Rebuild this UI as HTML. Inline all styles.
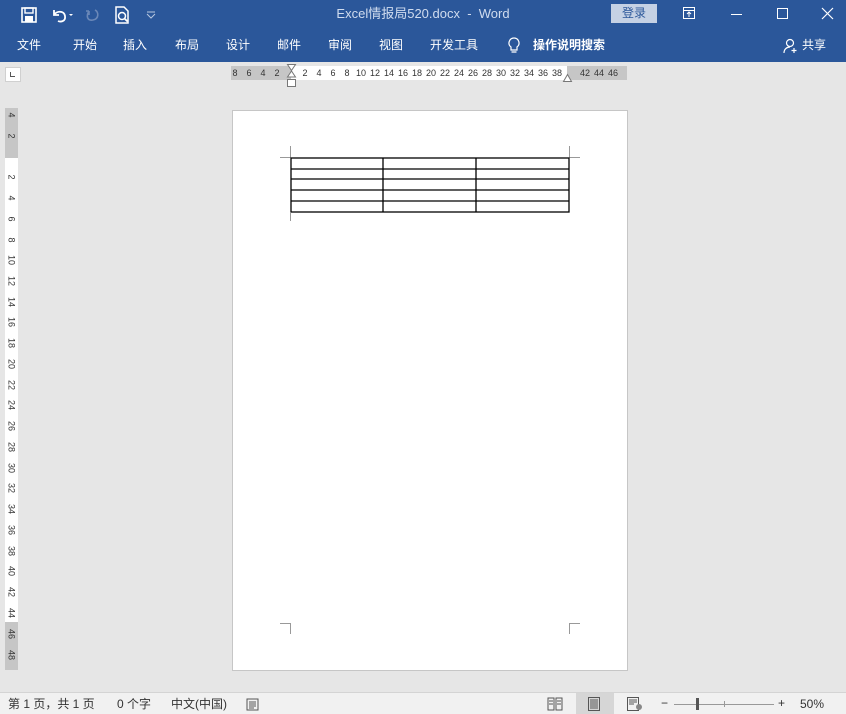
<!DOCTYPE html>
<html><head><meta charset="utf-8"><style>
*{margin:0;padding:0;box-sizing:border-box}
body{width:846px;height:714px;overflow:hidden;background:#e6e6e6;font-family:"Liberation Sans","Noto Sans CJK SC",sans-serif;position:relative}
.abs{position:absolute}
#title{left:0;top:0;width:846px;height:30px;background:#2b579a}
#tabs{left:0;top:30px;width:846px;height:32px;background:#2b579a}
.tab{position:absolute;top:7px;color:#fff;font-size:12px;line-height:16px}
.rl{position:absolute;font-size:9px;color:#333;top:68px;transform:translateX(-50%)}
.vl{position:absolute;font-size:9px;color:#333;left:5px;width:13px;text-align:center;transform:rotate(90deg)}
#status{left:0;top:692px;width:846px;height:22px;background:#f1f1f1;border-top:1px solid #d4d4d4;font-size:12px;color:#333;line-height:16px}
.cm{position:absolute;background:#999}
</style></head><body>
<div id="title" class="abs">
<svg class="abs" style="left:20px;top:6px" width="18" height="18" viewBox="0 0 18 18"><rect x="2" y="2" width="14" height="14" fill="none" stroke="#fff" stroke-width="1.6"/><rect x="5" y="2" width="8" height="5" fill="none" stroke="#fff" stroke-width="1.4"/><rect x="5" y="10" width="8" height="6" fill="#fff"/></svg>
<svg class="abs" style="left:50px;top:6px" width="26" height="18" viewBox="0 0 26 18"><path d="M4 4v5h5M4 9c2-4 10-5 11 1s-5 6-7 5" fill="none" stroke="#fff" stroke-width="1.8"/><path d="M19 8l2 2 2-2z" fill="#fff"/></svg>
<svg class="abs" style="left:85px;top:6px" width="16" height="18" viewBox="0 0 16 18"><path d="M10 4c4 2 4 9-2 10S1 10 4 5M4 5v4M4 5h-3" fill="none" stroke="#6b88b8" stroke-width="1.6"/></svg>
<svg class="abs" style="left:113px;top:5px" width="18" height="20" viewBox="0 0 18 20"><path d="M3 2h8l4 4v12H3z" fill="none" stroke="#fff" stroke-width="1.5"/><circle cx="9" cy="11" r="3.5" fill="none" stroke="#fff" stroke-width="1.5"/><path d="M11.5 13.5l3 3" stroke="#fff" stroke-width="1.8"/></svg>
<svg class="abs" style="left:145px;top:9px" width="12" height="10"><path d="M2 3h8M2 5l4 4 4-4" fill="none" stroke="#b8c8e0" stroke-width="1"/></svg>
<div class="abs" style="left:0;width:846px;top:5px;line-height:18px;text-align:center;color:#d0dcef;font-size:13px">Excel情报局520.docx&nbsp; - &nbsp;Word</div>
<div class="abs" style="left:611px;top:4px;width:46px;height:19px;background:#c5d1e4;color:#2b579a;font-size:12px;text-align:center;line-height:19px">登录</div>
<svg class="abs" style="left:682px;top:6px" width="14" height="14"><rect x="1.5" y="1.5" width="11" height="11" fill="none" stroke="#fff"/><path d="M1.5 4.5h11M7 6v5M5 8l2-2 2 2" fill="none" stroke="#fff"/></svg>
<div class="abs" style="left:731px;top:14px;width:11px;height:1px;background:#fff"></div>
<div class="abs" style="left:777px;top:8px;width:11px;height:11px;border:1px solid #fff"></div>
<svg class="abs" style="left:821px;top:7px" width="13" height="13"><path d="M1 1l11 11M12 1L1 12" stroke="#fff" stroke-width="1.2"/></svg>
</div>
<div id="tabs" class="abs">
<span class="tab" style="left:17px">文件</span><span class="tab" style="left:73px">开始</span><span class="tab" style="left:123px">插入</span><span class="tab" style="left:175px">布局</span><span class="tab" style="left:226px">设计</span><span class="tab" style="left:277px">邮件</span><span class="tab" style="left:328px">审阅</span><span class="tab" style="left:379px">视图</span><span class="tab" style="left:430px">开发工具</span>
<svg class="abs" style="left:508px;top:7px" width="12" height="18"><path d="M6 1a5 5 0 0 0-3 9v3h6v-3a5 5 0 0 0-3-9zM3.5 15h5" fill="none" stroke="#fff" stroke-width="1.2"/></svg>
<span class="tab" style="left:533px;font-weight:bold">操作说明搜索</span>
<svg class="abs" style="left:783px;top:8px" width="16" height="16"><circle cx="7" cy="5" r="3.5" fill="none" stroke="#fff" stroke-width="1.2"/><path d="M1 15c0-4 3-6 6-6M11 10v5M8.5 12.5h5" fill="none" stroke="#fff" stroke-width="1.2"/></svg>
<span class="tab" style="left:802px">共享</span>
</div>
<div class="abs" style="left:5px;top:67px;width:16px;height:15px;background:#fff;border:1px solid #d0d0d0"></div>
<div class="abs" style="left:10px;top:72px;width:5px;height:5px;border-left:1px solid #555;border-bottom:1px solid #555"></div>
<div class="abs" style="left:231px;top:66px;width:396px;height:14px;background:#c6c6c6"></div>
<div class="abs" style="left:291px;top:66px;width:276px;height:14px;background:#fff"></div>
<span class="rl" style="left:235px">8</span><span class="rl" style="left:249px">6</span><span class="rl" style="left:263px">4</span><span class="rl" style="left:277px">2</span>
<span class="rl" style="left:305px">2</span><span class="rl" style="left:319px">4</span><span class="rl" style="left:333px">6</span><span class="rl" style="left:347px">8</span><span class="rl" style="left:361px">10</span><span class="rl" style="left:375px">12</span><span class="rl" style="left:389px">14</span><span class="rl" style="left:403px">16</span><span class="rl" style="left:417px">18</span><span class="rl" style="left:431px">20</span><span class="rl" style="left:445px">22</span><span class="rl" style="left:459px">24</span><span class="rl" style="left:473px">26</span><span class="rl" style="left:487px">28</span><span class="rl" style="left:501px">30</span><span class="rl" style="left:515px">32</span><span class="rl" style="left:529px">34</span><span class="rl" style="left:543px">36</span><span class="rl" style="left:557px">38</span><span class="rl" style="left:585px">42</span><span class="rl" style="left:599px">44</span><span class="rl" style="left:613px">46</span>
<svg class="abs" style="left:286px;top:64px" width="12" height="24"><path d="M1.5 0.5h8l-4 6zM5.5 7l4 6h-8z" fill="#fff" stroke="#777"/><rect x="1.5" y="15.5" width="8" height="7" fill="#fff" stroke="#777"/></svg>
<svg class="abs" style="left:562px;top:73px" width="12" height="9"><path d="M1.5 8.5l4-7 4 7z" fill="#fff" stroke="#777"/></svg>
<div class="abs" style="left:5px;top:108px;width:13px;height:562px;background:#c6c6c6"></div>
<div class="abs" style="left:5px;top:158px;width:13px;height:464px;background:#fff"></div>
<div class="vl" style="top:110px">4</div><div class="vl" style="top:131px">2</div><div class="vl" style="top:172px">2</div><div class="vl" style="top:193px">4</div><div class="vl" style="top:214px">6</div><div class="vl" style="top:235px">8</div><div class="vl" style="top:255px">10</div><div class="vl" style="top:276px">12</div><div class="vl" style="top:297px">14</div><div class="vl" style="top:317px">16</div><div class="vl" style="top:338px">18</div><div class="vl" style="top:359px">20</div><div class="vl" style="top:380px">22</div><div class="vl" style="top:400px">24</div><div class="vl" style="top:421px">26</div><div class="vl" style="top:442px">28</div><div class="vl" style="top:463px">30</div><div class="vl" style="top:483px">32</div><div class="vl" style="top:504px">34</div><div class="vl" style="top:525px">36</div><div class="vl" style="top:546px">38</div><div class="vl" style="top:566px">40</div><div class="vl" style="top:587px">42</div><div class="vl" style="top:608px">44</div><div class="vl" style="top:629px">46</div><div class="vl" style="top:650px">48</div>
<div class="abs" style="left:232px;top:110px;width:396px;height:561px;background:#fff;border:1px solid #c6c6c6"></div>
<div class="cm" style="left:290px;top:146px;width:1px;height:11px"></div><div class="cm" style="left:280px;top:157px;width:11px;height:1px"></div>
<div class="cm" style="left:569px;top:146px;width:1px;height:11px"></div><div class="cm" style="left:569px;top:157px;width:11px;height:1px"></div>
<div class="cm" style="left:290px;top:213px;width:1px;height:8px"></div>
<div class="cm" style="left:290px;top:623px;width:1px;height:11px"></div><div class="cm" style="left:280px;top:623px;width:11px;height:1px"></div>
<div class="cm" style="left:569px;top:623px;width:1px;height:11px"></div><div class="cm" style="left:569px;top:623px;width:11px;height:1px"></div>
<svg class="abs" style="left:290px;top:157px" width="281" height="57"><g stroke="#000" stroke-width="1.3" fill="none"><rect x="1" y="1" width="278" height="54"/><path d="M1 12h278M1 22h278M1 33h278M1 44h278M93 1v54M186 1v54"/></g></svg>
<div id="status" class="abs">
<span class="abs" style="left:8px;top:3px">第 1 页，共 1 页</span><span class="abs" style="left:117px;top:3px">0 个字</span><span class="abs" style="left:171px;top:3px">中文(中国)</span>
<svg class="abs" style="left:246px;top:5px" width="14" height="13"><rect x="1" y="1" width="11" height="11" fill="none" stroke="#555"/><path d="M3 4h7M3 6h7M3 8h7M3 10h5" stroke="#555"/></svg>
<svg class="abs" style="left:547px;top:4px" width="16" height="14"><path d="M1 1h6v12H1zM9 1h6v12H9z" fill="none" stroke="#555"/><path d="M2 4h4M2 7h4M10 4h4M10 7h4" stroke="#555"/></svg>
<div class="abs" style="left:576px;top:0;width:38px;height:21px;background:#d6d6d6"></div>
<svg class="abs" style="left:587px;top:4px" width="14" height="14"><rect x="1.5" y="0.5" width="11" height="13" fill="none" stroke="#555"/><path d="M3 3h8M3 5h8M3 7h8M3 9h8M3 11h8" stroke="#555"/></svg>
<svg class="abs" style="left:627px;top:4px" width="16" height="14"><rect x="0.5" y="0.5" width="11" height="13" fill="none" stroke="#555"/><path d="M2 3h8M2 5h8M2 7h5" stroke="#555"/><circle cx="12" cy="10" r="3" fill="#888"/></svg>
<span class="abs" style="left:661px;top:2px">−</span>
<div class="abs" style="left:674px;top:11px;width:100px;height:1px;background:#999"></div>
<div class="abs" style="left:696px;top:5px;width:3px;height:12px;background:#555"></div>
<div class="abs" style="left:724px;top:8px;width:1px;height:6px;background:#999"></div>
<span class="abs" style="left:778px;top:2px">+</span><span class="abs" style="left:800px;top:3px">50%</span>
</div>
</body></html>
